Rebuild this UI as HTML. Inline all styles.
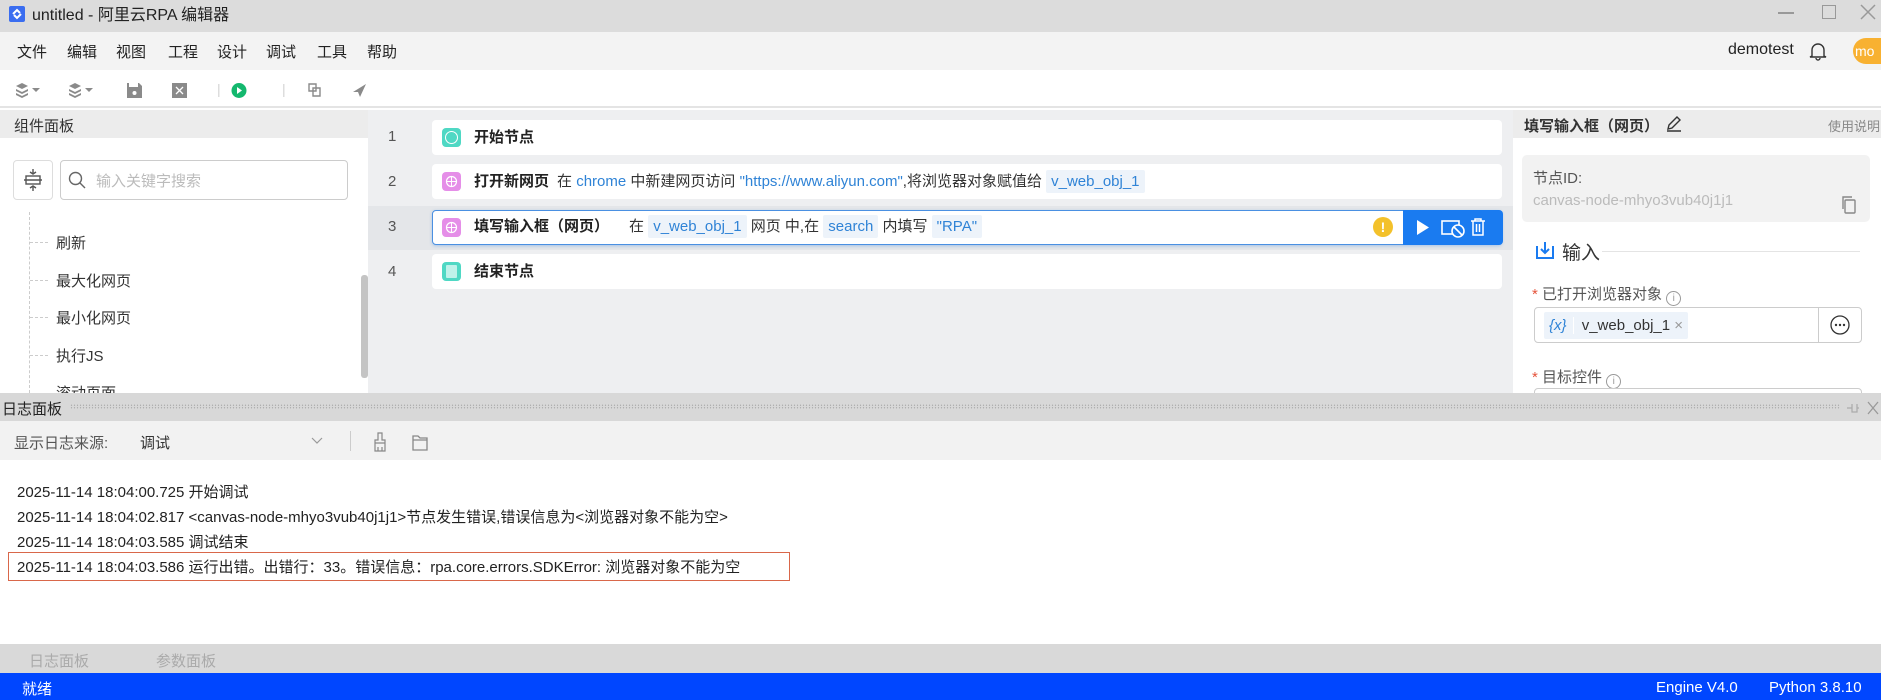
<!DOCTYPE html>
<html><head><meta charset="utf-8"><style>
*{box-sizing:border-box;margin:0;padding:0}
body{width:1881px;height:700px;overflow:hidden;position:relative;font-family:"Liberation Sans","Noto Sans CJK SC",sans-serif;color:#333;background:#fff}
.a{position:absolute}
.t{white-space:nowrap}
.card{position:absolute;left:432px;width:1070px;height:35px;background:#fff;border-radius:4px}
.ni{position:absolute;left:10px;top:8px;width:19px;height:19px;border-radius:4px}
.ct{position:absolute;left:42px;top:0;line-height:35px;font-size:15px;white-space:nowrap;color:#333}
.ct b{font-weight:bold;color:#222;margin-right:8px}
.bl{color:#2f83d6}
.tag{background:#edf3fa;color:#2f83d6;padding:3px 5px;border-radius:2px}
.ln{position:absolute;left:388px;font-size:15px;color:#555}
.log{position:absolute;left:17px;font-size:15px;color:#222;white-space:nowrap}
</style></head><body>
<!-- title bar -->
<div class="a" style="left:0;top:0;width:1881px;height:32px;background:#dcdcdc"></div>
<div class="a" style="left:9px;top:6px;width:16px;height:16px;background:#3a6df0;border-radius:2px"><svg width="16" height="16"><path d="M4 8 L8 4 L11 7 M5 9 L8 12 L12 8" stroke="#fff" stroke-width="2" fill="none"/></svg></div>
<div class="a t" style="left:32px;top:1px;font-size:16px;color:#222">untitled - 阿里云RPA 编辑器</div>
<div class="a" style="left:1778px;top:12px;width:16px;height:1.5px;background:#999"></div>
<div class="a" style="left:1822px;top:5px;width:14px;height:14px;border:1.5px solid #999"></div>
<svg class="a" style="left:1860px;top:4px" width="16" height="16"><path d="M1 1L15 15M15 1L1 15" stroke="#999" stroke-width="1.5"/></svg>
<!-- menu -->
<div class="a" style="left:0;top:32px;width:1881px;height:38px;background:#f3f3f3"></div>
<div class="a t" style="left:17px;top:41px;font-size:15px;color:#222;word-spacing:0">
<span style="position:absolute;left:0">文件</span><span style="position:absolute;left:50px">编辑</span><span style="position:absolute;left:99px">视图</span><span style="position:absolute;left:151px">工程</span><span style="position:absolute;left:200px">设计</span><span style="position:absolute;left:249px">调试</span><span style="position:absolute;left:300px">工具</span><span style="position:absolute;left:350px">帮助</span></div>
<div class="a t" style="left:1728px;top:41px;font-size:16px;color:#222">demotest</div>
<svg class="a" style="left:1808px;top:41px" width="20" height="20"><path d="M4 15 L4 9 A6 6 0 0 1 16 9 L16 15 L18 16 L2 16 Z M8 17 A2 2 0 0 0 12 17" stroke="#333" stroke-width="1.4" fill="none"/></svg>
<div class="a" style="left:1853px;top:38px;width:28px;height:26px;background:#f8b131;border-radius:13px 0 0 13px;color:#fff;font-size:14px;line-height:26px;padding-left:2px">mo</div>
<!-- toolbar -->
<div class="a" style="left:0;top:70px;width:1881px;height:38px;background:#fff;border-bottom:2px solid #e4e4e4"></div>
<svg class="a" style="left:13px;top:80px" width="400" height="20">
<g fill="#8a8a8a"><path d="M9 3 L15 6 L9 9 L3 6Z M3 9 L9 12 L15 9 L15 11 L9 14 L3 11Z M3 13 L9 16 L15 13 L15 15 L9 18 L3 15Z"/><path d="M19 8 L27 8 L23 12Z"/>
<path d="M62 3 L68 6 L62 9 L56 6Z M56 9 L62 12 L68 9 L68 11 L62 14 L56 11Z M56 13 L62 16 L68 13 L68 15 L62 18 L56 15Z"/><path d="M72 8 L80 8 L76 12Z"/>
<path d="M114 3 L126 3 L129 6 L129 18 L114 18Z"/><rect x="116" y="3" width="9" height="4" fill="#fff"/><circle cx="121.5" cy="13" r="2" fill="#fff"/>
<rect x="159" y="3" width="15" height="15"/></g>
<path d="M163 7 L170 14 M170 7 L163 14" stroke="#fff" stroke-width="1.3"/>
<rect x="205" y="4" width="1.5" height="13" fill="#ddd"/>
<circle cx="226" cy="10.5" r="7.5" fill="#14b86e"/><path d="M224 7 L229 10.5 L224 14Z" fill="#fff"/>
<rect x="270" y="4" width="1.5" height="13" fill="#ddd"/>
<path d="M296 4 L303 4 L303 11 L296 11Z M300 8 L307 8 L307 16 L300 16Z" stroke="#8a8a8a" stroke-width="1.4" fill="none"/>
<path d="M340 12 L353 4 L347 17 L345 12Z" fill="#8a8a8a"/>
</svg>
<!-- left panel -->
<div class="a" style="left:0;top:110px;width:368px;height:283px;background:#fff"></div>
<div class="a" style="left:0;top:110px;width:368px;height:28px;background:#ececec"></div>
<div class="a t" style="left:14px;top:115px;font-size:15px;color:#333">组件面板</div>
<div class="a" style="left:13px;top:160px;width:40px;height:40px;border:1px solid #ddd;border-radius:4px;background:#fff"></div>
<svg class="a" style="left:22px;top:168px" width="22" height="24"><path d="M11 1 L11 6 M8 4 L11 6 L14 4 M11 23 L11 18 M8 20 L11 18 L14 20 M2 12 L20 12" stroke="#555" stroke-width="1.4" fill="none"/><rect x="4" y="8" width="14" height="8" stroke="#555" stroke-width="1.4" fill="none"/></svg>
<div class="a" style="left:60px;top:160px;width:288px;height:40px;border:1px solid #ccc;border-radius:4px;background:#fff"></div>
<svg class="a" style="left:68px;top:171px" width="18" height="18"><circle cx="7.5" cy="7.5" r="6" stroke="#666" stroke-width="1.4" fill="none"/><path d="M12 12L17 17" stroke="#666" stroke-width="1.4"/></svg>
<div class="a t" style="left:96px;top:170px;font-size:15px;color:#bbb">输入关键字搜索</div>
<div class="a" style="left:29px;top:212px;height:181px;border-left:1px dashed #ccc"></div>
<div class="a" style="left:30px;top:242px;width:18px;border-top:1px dashed #ccc"></div>
<div class="a" style="left:30px;top:280px;width:18px;border-top:1px dashed #ccc"></div>
<div class="a" style="left:30px;top:317px;width:18px;border-top:1px dashed #ccc"></div>
<div class="a" style="left:30px;top:355px;width:18px;border-top:1px dashed #ccc"></div>
<div class="a t" style="left:56px;top:232px;font-size:15px;color:#333">刷新</div>
<div class="a t" style="left:56px;top:270px;font-size:15px;color:#333">最大化网页</div>
<div class="a t" style="left:56px;top:307px;font-size:15px;color:#333">最小化网页</div>
<div class="a t" style="left:56px;top:345px;font-size:15px;color:#333">执行JS</div>
<div class="a t" style="left:56px;top:382px;font-size:15px;color:#333">滚动页面</div>
<div class="a" style="left:361px;top:275px;width:7px;height:103px;background:#c4c4c4;border-radius:3px"></div>
<!-- canvas -->
<div class="a" style="left:368px;top:110px;width:1145px;height:283px;background:#eeeff1"></div>
<div class="a" style="left:368px;top:206px;width:1145px;height:44px;background:#e4e6e9"></div>
<div class="ln" style="top:128px">1</div><div class="ln" style="top:173px">2</div><div class="ln" style="top:218px">3</div><div class="ln" style="top:263px">4</div>
<div class="card" style="top:120px"><div class="ni" style="background:#4fd8c4"><div style="margin:3px;width:13px;height:13px;border:1.5px solid #fff;border-radius:50%"></div></div><div class="ct"><b>开始节点</b></div></div>
<div class="card" style="top:164px"><div class="ni" style="background:#e58ee8"><svg width="19" height="19"><circle cx="9.5" cy="9.5" r="5" stroke="#fff" stroke-width="1.2" fill="none"/><path d="M4.5 9.5H14.5M9.5 4.5V14.5" stroke="#fff" stroke-width="1"/></svg></div><div class="ct"><b>打开新网页</b>在 <span class="bl">chrome</span> 中新建网页访问 <span class="bl">"https://www.aliyun.com"</span>,将浏览器对象赋值给 <span class="tag">v_web_obj_1</span></div></div>
<div class="card" style="top:210px;border:1.5px solid #4a90e2;height:35px;box-shadow:0 1px 3px rgba(74,144,226,.4)"><div class="ni" style="background:#e58ee8;top:7px;left:9px"><svg width="19" height="19"><circle cx="9.5" cy="9.5" r="5" stroke="#fff" stroke-width="1.2" fill="none"/><path d="M4.5 9.5H14.5M9.5 4.5V14.5" stroke="#fff" stroke-width="1"/></svg></div><div class="ct" style="line-height:32px;left:41px"><b style="margin-right:20px">填写输入框（网页）</b>在 <span class="tag">v_web_obj_1</span> 网页 中,在 <span class="tag">search</span> 内填写 <span class="tag">"RPA"</span></div>
<div class="a" style="left:940px;top:6px;width:20px;height:20px;border-radius:50%;background:#f3c12b;color:#fff;font-size:14px;font-weight:bold;text-align:center;line-height:20px">!</div>
<div class="a" style="left:970px;top:-1.5px;width:100px;height:35px;background:#1a7bf0;border-radius:0 4px 4px 0">
<svg width="100" height="35"><path d="M14 10 L26 17.5 L14 25Z" fill="#fff"/><rect x="39" y="11" width="17" height="13" stroke="#fff" stroke-width="1.6" fill="none"/><circle cx="55" cy="21" r="6" fill="#1a7bf0" stroke="#fff" stroke-width="1.6"/><path d="M51 17L59 25" stroke="#fff" stroke-width="1.6"/><path d="M68 11H82M72 11V9H78V11M70 11V25H80V11M73.5 14V22M76.5 14V22" stroke="#fff" stroke-width="1.5" fill="none"/></svg></div></div>
<div class="card" style="top:254px"><div class="ni" style="background:#4fd8c4"><div style="margin:3px 4px;width:11px;height:13px;background:#bff2ea;border-radius:1px"></div></div><div class="ct"><b>结束节点</b></div></div>
<!-- right panel -->
<div class="a" style="left:1513px;top:110px;width:368px;height:283px;background:#fff"></div>
<div class="a" style="left:1513px;top:110px;width:368px;height:28px;background:#ececec"></div>
<div class="a t" style="left:1524px;top:115px;font-size:15px;color:#333;font-weight:bold">填写输入框（网页）</div>
<svg class="a" style="left:1665px;top:115px" width="18" height="18"><path d="M3 14 L4 10 L12 2 L15 5 L7 13 Z M2 16 H16" stroke="#333" stroke-width="1.4" fill="none"/></svg>
<div class="a t" style="left:1828px;top:116px;font-size:13px;color:#888">使用说明</div>
<div class="a" style="left:1522px;top:155px;width:348px;height:67px;background:#f2f2f2;border-radius:5px"></div>
<div class="a t" style="left:1533px;top:167px;font-size:15px;color:#555">节点ID:</div>
<div class="a t" style="left:1533px;top:192px;font-size:15px;color:#bbb">canvas-node-mhyo3vub40j1j1</div>
<svg class="a" style="left:1840px;top:195px" width="18" height="20"><rect x="5" y="5" width="10" height="13" stroke="#888" stroke-width="1.4" fill="none" rx="1"/><path d="M3 14V2H12" stroke="#888" stroke-width="1.4" fill="none"/></svg>
<svg class="a" style="left:1535px;top:240px" width="20" height="20"><path d="M2 6V18H18V6" stroke="#1a7bf0" stroke-width="2" fill="none"/><path d="M10 2V12M6 9L10 13L14 9" stroke="#1a7bf0" stroke-width="2" fill="none"/></svg>
<div class="a t" style="left:1562px;top:238px;font-size:19px;color:#333">输入</div>
<div class="a" style="left:1602px;top:251px;width:258px;height:1px;background:#e4e4e4"></div>
<div class="a t" style="left:1532px;top:283px;font-size:15px;color:#555"><span style="color:#e5533b">*</span> 已打开浏览器对象 <span style="display:inline-block;width:15px;height:15px;border:1px solid #999;border-radius:50%;font-size:10px;text-align:center;line-height:13px;color:#999;vertical-align:-2px">i</span></div>
<div class="a" style="left:1534px;top:307px;width:328px;height:36px;border:1px solid #ccc;border-radius:4px"></div>
<div class="a" style="left:1818px;top:307px;width:1px;height:36px;background:#ccc"></div>
<svg class="a" style="left:1829px;top:314px" width="22" height="22"><circle cx="11" cy="11" r="9" stroke="#333" stroke-width="1.3" fill="none"/><circle cx="7" cy="11" r="1.2" fill="#333"/><circle cx="11" cy="11" r="1.2" fill="#333"/><circle cx="15" cy="11" r="1.2" fill="#333"/></svg>
<div class="a t" style="left:1544px;top:312px;height:27px;width:144px;background:#edf3fa;border-radius:2px;font-size:15px;line-height:27px"><span style="color:#2f83d6;padding:0 6px 0 5px;border-right:1px solid #fff;font-style:italic">{x}</span> <span style="color:#333;margin-left:4px">v_web_obj_1</span> <span style="color:#999">×</span></div>
<div class="a t" style="left:1532px;top:366px;font-size:15px;color:#555"><span style="color:#e5533b">*</span> 目标控件 <span style="display:inline-block;width:15px;height:15px;border:1px solid #999;border-radius:50%;font-size:10px;text-align:center;line-height:13px;color:#999;vertical-align:-2px">i</span></div>
<div class="a" style="left:1534px;top:388px;width:328px;height:20px;border:1px solid #ccc;border-radius:4px"></div>
<!-- log panel -->
<div class="a" style="left:0;top:393px;width:1881px;height:28px;background:#d8d8d8"></div>
<div class="a t" style="left:2px;top:398px;font-size:15px;color:#222">日志面板</div>
<div class="a" style="left:70px;top:404px;width:1770px;height:5px;background-image:radial-gradient(#aaa 0.6px,transparent 0.8px);background-size:3px 2.5px"></div>
<svg class="a" style="left:1845px;top:400px" width="36" height="16"><path d="M2 8H7M7 4V12H12V4M12 8H14" stroke="#aaa" stroke-width="1.2" fill="none"/><path d="M23 2L33 14M33 2L23 14" stroke="#999" stroke-width="1.3"/></svg>
<div class="a" style="left:0;top:421px;width:1881px;height:39px;background:#f2f2f2"></div>
<div class="a t" style="left:14px;top:432px;font-size:15px;color:#555">显示日志来源:</div>
<div class="a t" style="left:140px;top:432px;font-size:15px;color:#333">调试</div>
<svg class="a" style="left:311px;top:437px" width="12" height="8"><path d="M1 1L6 6L11 1" stroke="#999" stroke-width="1.2" fill="none"/></svg>
<div class="a" style="left:350px;top:431px;width:1px;height:20px;background:#ccc"></div>
<svg class="a" style="left:372px;top:431px" width="60" height="22"><path d="M6 2H10V9H13V12H3V9H6Z M3 12H13V20H3Z M6 16V20M10 16V20" stroke="#888" stroke-width="1.2" fill="none"/><path d="M41 5H46L48 7H55V19H41Z M41 9H55" stroke="#888" stroke-width="1.3" fill="none"/></svg>
<div class="a" style="left:0;top:460px;width:1881px;height:184px;background:#fff"></div>
<div class="log" style="top:481px">2025-11-14 18:04:00.725 开始调试</div>
<div class="log" style="top:506px">2025-11-14 18:04:02.817 &lt;canvas-node-mhyo3vub40j1j1&gt;节点发生错误,错误信息为&lt;浏览器对象不能为空&gt;</div>
<div class="log" style="top:531px">2025-11-14 18:04:03.585 调试结束</div>
<div class="log" style="top:556px">2025-11-14 18:04:03.586 运行出错。出错行：33。错误信息：rpa.core.errors.SDKError: 浏览器对象不能为空</div>
<div class="a" style="left:8px;top:552px;width:782px;height:29px;border:1.5px solid #d9674a"></div>
<div class="a" style="left:0;top:644px;width:1881px;height:29px;background:#d9d9d9"></div>
<div class="a t" style="left:29px;top:650px;font-size:15px;color:#aaa">日志面板</div>
<div class="a t" style="left:156px;top:650px;font-size:15px;color:#aaa">参数面板</div>
<div class="a" style="left:0;top:673px;width:1881px;height:27px;background:#0046ff"></div>
<div class="a t" style="left:22px;top:678px;font-size:15px;color:#fff">就绪</div>
<div class="a t" style="left:1656px;top:679px;font-size:15px;color:#fff">Engine V4.0</div>
<div class="a t" style="left:1769px;top:679px;font-size:15px;color:#fff">Python 3.8.10</div>
</body></html>
